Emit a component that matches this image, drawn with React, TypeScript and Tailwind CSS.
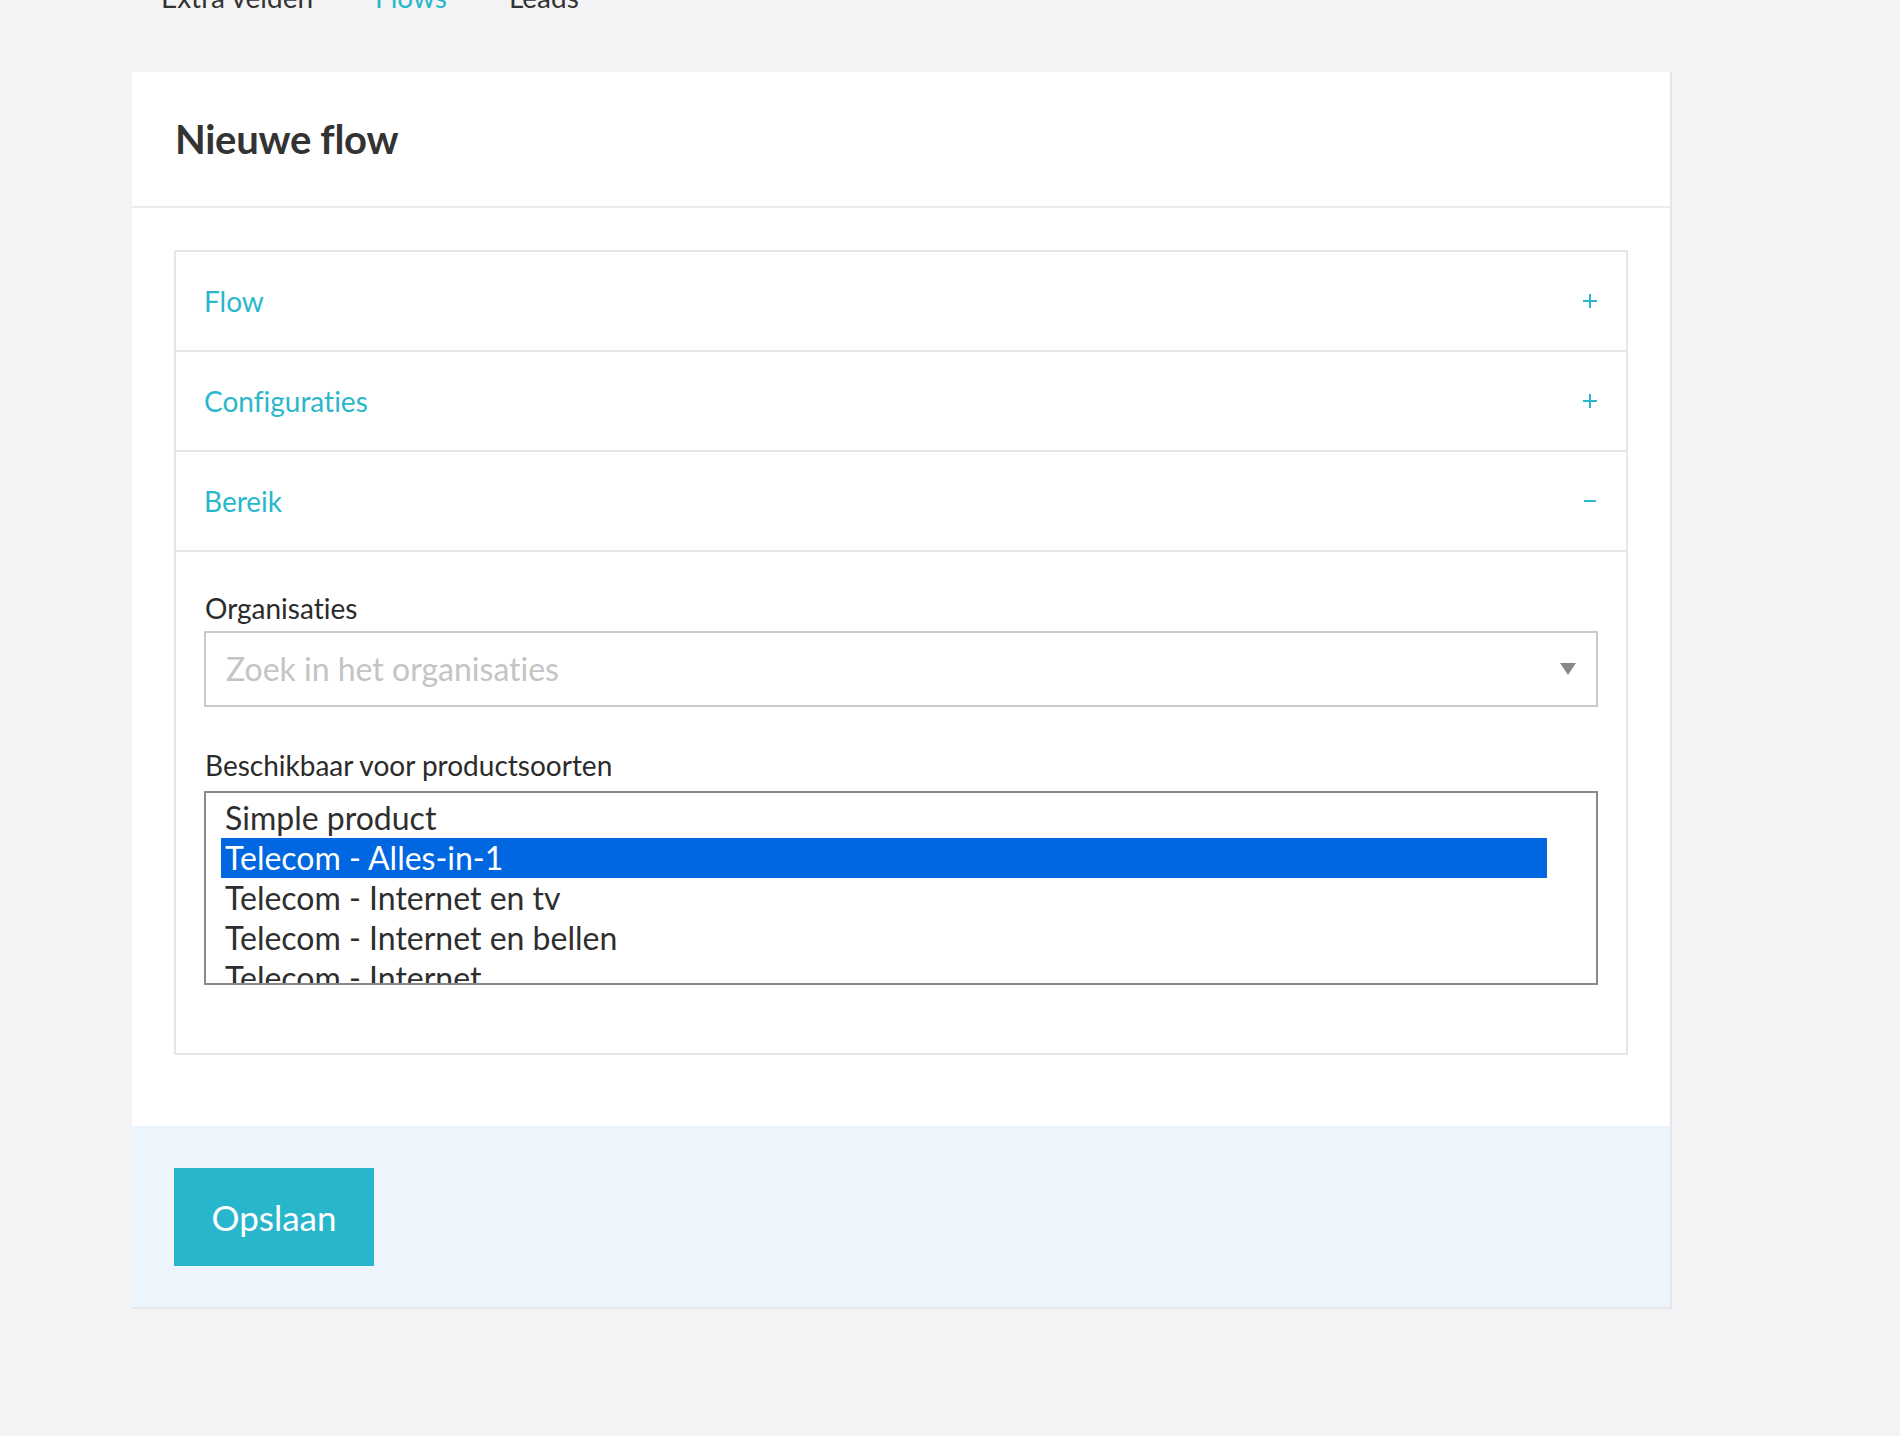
import { useState } from "react";

const teal = "#29b7cc";

const sections = [
  { key: "flow", title: "Flow" },
  { key: "config", title: "Configuraties" },
  { key: "bereik", title: "Bereik" },
];

const productTypes = [
  "Simple product",
  "Telecom - Alles-in-1",
  "Telecom - Internet en tv",
  "Telecom - Internet en bellen",
  "Telecom - Internet",
  "Telecom - Bellen",
];

function PlusIcon() {
  return (
    <svg width="14" height="14" viewBox="0 0 14 14">
      <path d="M7 0v14M0 7h14" stroke={teal} strokeWidth="2" fill="none" />
    </svg>
  );
}

function MinusIcon() {
  return (
    <svg width="14" height="14" viewBox="0 0 14 14">
      <path d="M1 7h12" stroke={teal} strokeWidth="2" fill="none" />
    </svg>
  );
}

function BereikContent() {
  const [selected, setSelected] = useState(1);

  return (
    <div className="pt-[38px] pb-[68px] px-[28px]">
      <div className="text-[28px] leading-[36px] text-[#2b2b2b] mb-[5px] pl-[1px]">Organisaties</div>
      <div className="h-[76px] border-2 border-[#cacaca] flex items-center justify-between pl-[20px] pr-[20px] bg-white">
        <span className="text-[32px] text-[#c4c4c4]">Zoek in het organisaties</span>
        <svg width="16" height="12" viewBox="0 0 16 12">
          <path d="M0 0h16L8 12z" fill="#888" />
        </svg>
      </div>

      <div className="text-[28px] leading-[36px] text-[#2b2b2b] mt-[40px] mb-[8px] pl-[1px]">
        Beschikbaar voor productsoorten
      </div>
      <div className="h-[194px] border-2 border-[#8a8a8a] overflow-hidden pt-[5px] pl-[15px] pr-[49px] bg-white">
        {productTypes.map((p, i) => (
          <div
            key={p}
            onClick={() => setSelected(i)}
            className={
              i === selected
                ? "h-[40px] leading-[40px] text-[32px] pl-[4px] bg-[#0067e1] text-white whitespace-nowrap"
                : "h-[40px] leading-[40px] text-[32px] pl-[4px] text-[#2e2e2e] whitespace-nowrap"
            }
          >
            {p}
          </div>
        ))}
      </div>
    </div>
  );
}

export default function App() {
  const [open, setOpen] = useState("bereik");

  return (
    <div className="min-h-screen flex flex-col bg-[#f3f3f5] font-['Lato','Liberation_Sans',sans-serif] [font-variant-ligatures:none] overflow-hidden">
      <div className="flex gap-[62px] pl-[161px] -mt-[20px] h-[34px] text-[28px] leading-[34px] text-[#333]">
        <span>Extra velden</span>
        <span className="text-[#29b7cc]">Flows</span>
        <span>Leads</span>
      </div>

      <div className="ml-[132px] mt-[58px] w-[1540px] bg-white border-r-2 border-b-2 border-[#e6e6e8]">
        <div className="h-[136px] flex items-center pl-[43px] border-b-2 border-[#ebebeb]">
          <h1 className="text-[40px] font-bold text-[#333] tracking-[-0.3px]">Nieuwe flow</h1>
        </div>

        <div className="pt-[42px] pb-[71px] px-[42px]">
          <div className="border-2 border-[#e6e6e6]">
            {sections.map((s, i) => (
              <div key={s.key} className={i < sections.length - 1 || open === s.key ? "border-b-2 border-[#e6e6e6]" : ""}>
                <button
                  type="button"
                  onClick={() => setOpen(open === s.key ? "" : s.key)}
                  className="w-full h-[98px] flex items-center justify-between pl-[28px] pr-[29px] text-left"
                >
                  <span className="text-[28px] text-[#29b7cc]">{s.title}</span>
                  {open === s.key ? <MinusIcon /> : <PlusIcon />}
                </button>
              </div>
            ))}
            {open === "bereik" && <BereikContent />}
          </div>
        </div>

        <div className="bg-[#edf5fc] pt-[42px] pb-[41px] px-[42px]">
          <button type="button" className="w-[200px] h-[98px] bg-[#27b6cc] text-white text-[35px]">
            Opslaan
          </button>
        </div>
      </div>
    </div>
  );
}
